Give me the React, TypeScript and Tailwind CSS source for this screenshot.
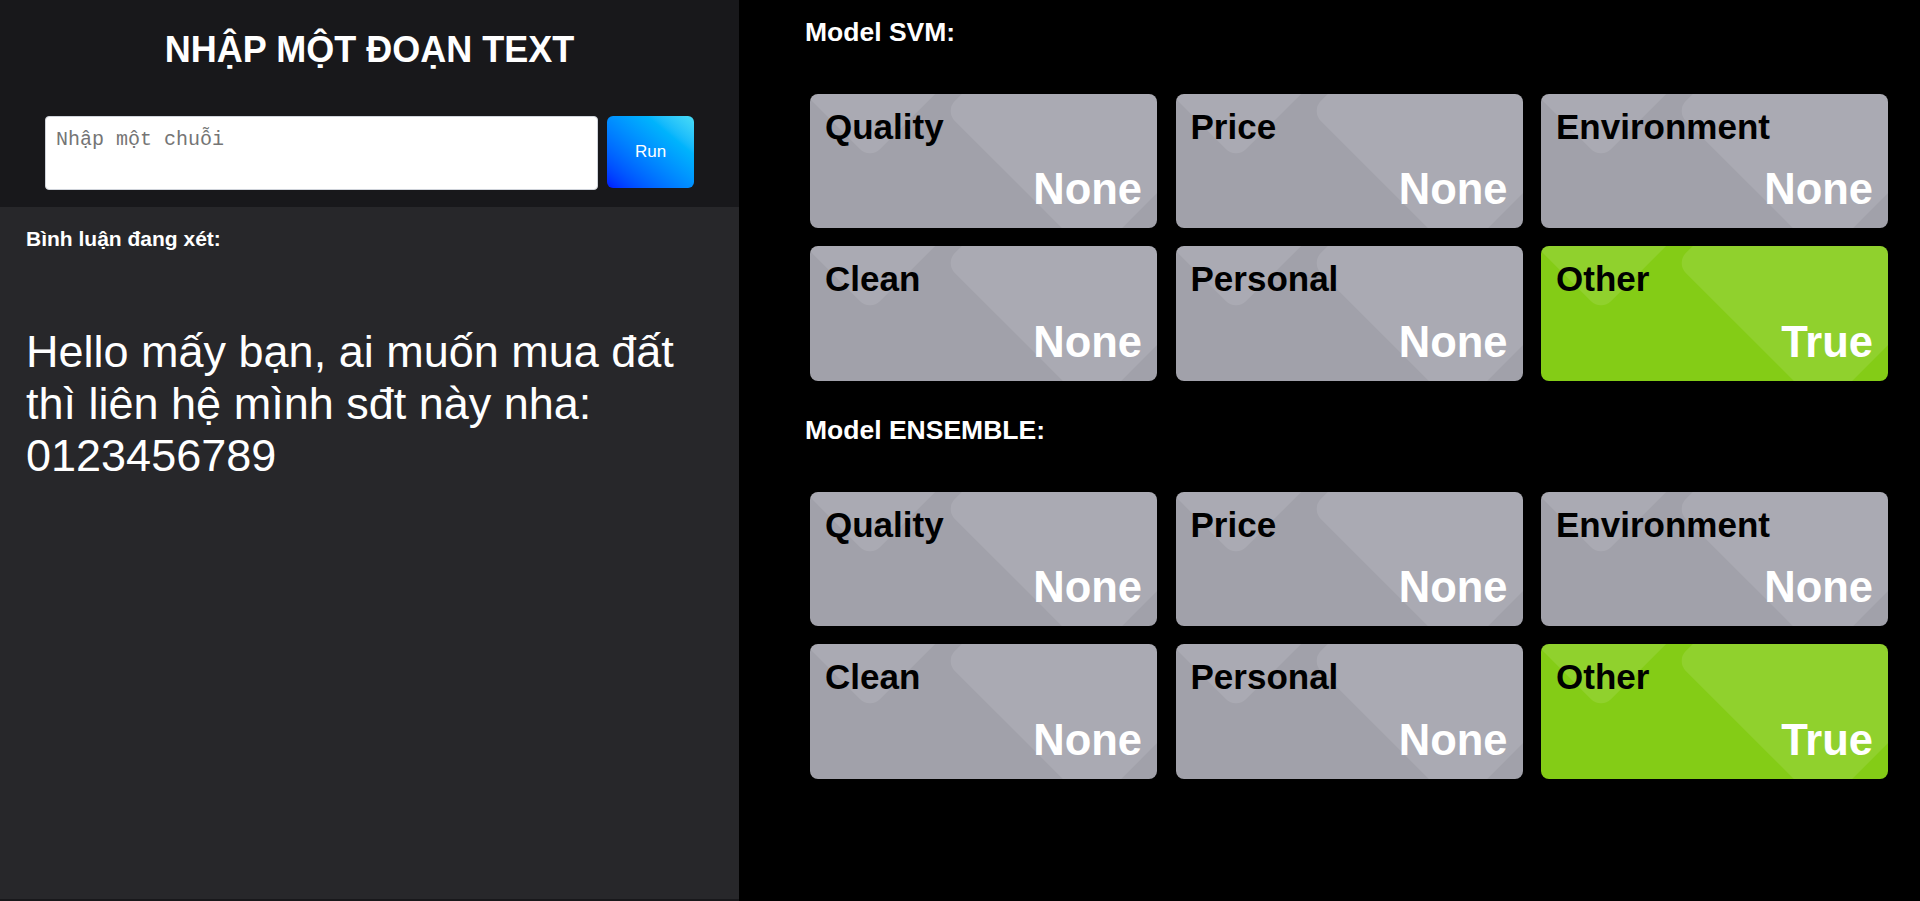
import React from "react";

const SANS = "font-['Liberation_Sans',Arial,sans-serif]";

type CardProps = { label: string; value: string; active?: boolean };

function Card({ label, value, active }: CardProps) {
  return (
    <div
      className={`relative h-[134.5px] overflow-hidden rounded-[8px] ${
        active ? "bg-[#84cc16]" : "bg-[#a1a1aa]"
      }`}
    >
      <div className="absolute left-[-44px] top-[-186px] h-[208px] w-[208px] rotate-45 rounded-[14px] bg-white/10" />
      <div className="absolute left-[178px] top-[-87px] h-[208px] w-[208px] rotate-45 rounded-[14px] bg-white/10" />
      <div className="relative z-10 flex h-full flex-col justify-between px-[15px] pb-[14px] pt-[13px]">
        <div className="text-[35px] font-bold leading-[normal] text-black">{label}</div>
        <div className="text-right text-[43.5px] font-bold leading-[normal] text-white">{value}</div>
      </div>
    </div>
  );
}

const labels = ["Quality", "Price", "Environment", "Clean", "Personal", "Other"];

function Grid() {
  return (
    <div className="ml-[5px] grid w-[1078px] grid-cols-3 gap-x-[18.5px] gap-y-[18px]">
      {labels.map((l) => (
        <Card key={l} label={l} value={l === "Other" ? "True" : "None"} active={l === "Other"} />
      ))}
    </div>
  );
}

export default function App() {
  return (
    <div className={`flex h-[901px] w-[1920px] overflow-hidden bg-black ${SANS}`}>
      {/* Left panel */}
      <div className="flex h-[901px] w-[739px] shrink-0 flex-col bg-[#18181b]">
        <div className="flex h-[207px] flex-col items-center pt-[29px]">
          <h1 className="text-center text-[36px] font-bold leading-[normal] text-white">
            NHẬP MỘT ĐOẠN TEXT
          </h1>
          <div className="mt-[45px] flex items-start gap-[9px]">
            <textarea
              placeholder="Nhập một chuỗi"
              className="h-[74px] w-[553px] resize-none rounded-[4px] border border-[#cfd3da] bg-white px-[10px] py-[11px] font-['Liberation_Mono',monospace] text-[20px] leading-[normal] text-black outline-none placeholder:text-[#757575]"
            />
            <button className="h-[72px] w-[87px] rounded-[6px] bg-linear-to-tr from-[#0010ff] to-[#48dcf6] text-[17px] leading-[normal] text-white">
              Run
            </button>
          </div>
        </div>
        <div className="h-[692px] bg-[#27272a] px-[26px] pt-[20px]">
          <div className="text-[21px] font-bold leading-[normal] text-white">Bình luận đang xét:</div>
          <div className="mt-[75px] text-[45px] leading-[normal] text-white">
            Hello mấy bạn, ai muốn mua đất thì liên hệ mình sđt này nha: 0123456789
          </div>
        </div>
      </div>

      {/* Right panel */}
      <div className="flex-1 pl-[66px] pt-[16.5px]">
        <div className="text-[26.5px] font-bold leading-[normal] text-white">Model SVM:</div>
        <div className="mt-[46.3px]">
          <Grid />
        </div>
        <div className="mt-[34.5px] text-[26.5px] font-bold leading-[normal] text-white">Model ENSEMBLE:</div>
        <div className="mt-[45.6px]">
          <Grid />
        </div>
      </div>
    </div>
  );
}
